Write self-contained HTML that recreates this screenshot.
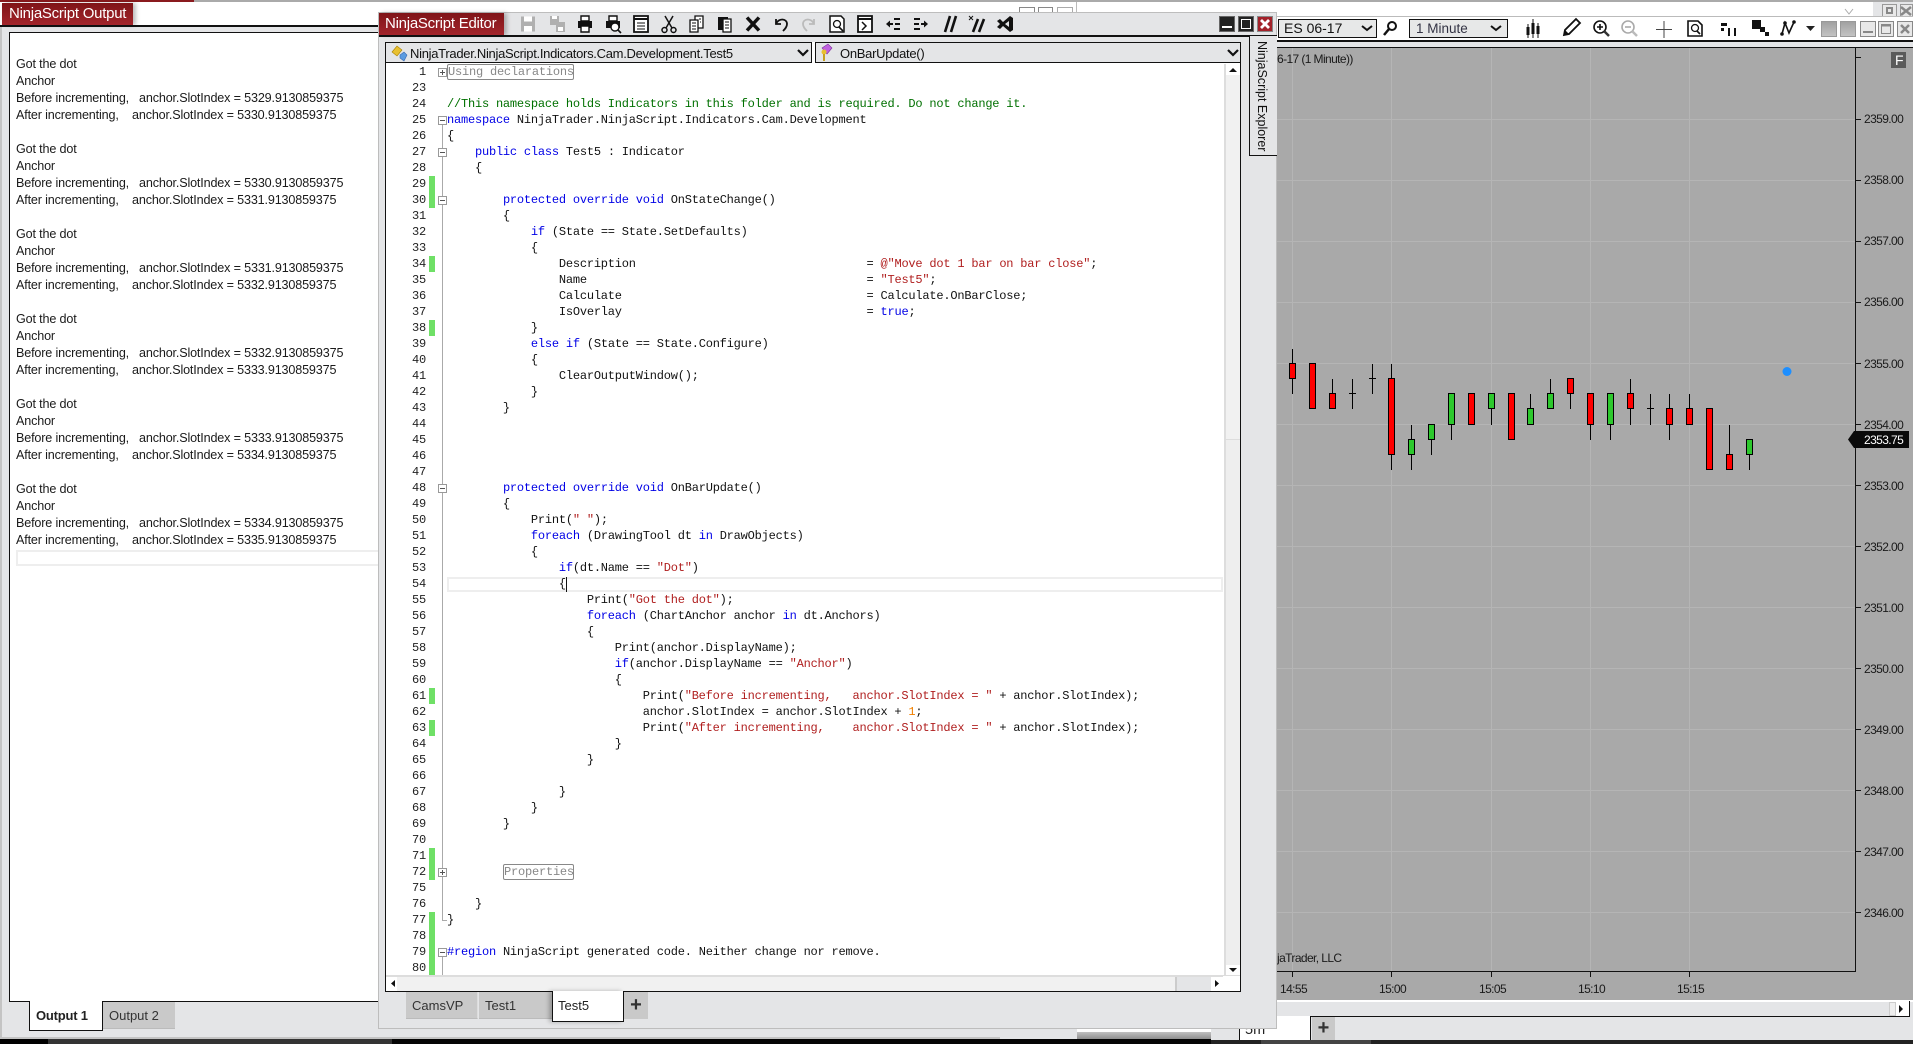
<!DOCTYPE html>
<html><head><meta charset="utf-8"><title>NinjaScript Editor</title>
<style>
html,body{margin:0;padding:0;background:#fff;width:1913px;height:1044px;overflow:hidden}
body{position:relative;font-family:"Liberation Sans",sans-serif;color:#111}
.a{position:absolute;box-sizing:border-box}
pre{margin:0;position:absolute}
.red{background:linear-gradient(#7f1418,#a2242a);color:#fff;font-size:15px;line-height:22px;letter-spacing:-.25px;white-space:nowrap;box-shadow:3px 0 4px rgba(0,0,0,.25)}
.out{left:16px;top:56px;font:12.6px/17px "Liberation Sans",sans-serif;color:#1a1a1a;letter-spacing:-.16px}
.code{left:447px;top:64px;font:12px/16px "Liberation Mono",monospace;letter-spacing:-.21px;color:#111}
.nums{left:396px;width:30px;top:64px;text-align:right;font:12px/16px "Liberation Mono",monospace;letter-spacing:-.21px;color:#222}
.code b{font-weight:normal;color:#0000e6}.code i{font-style:normal;color:#007000}.code s{text-decoration:none;color:#b01f1f}.code u{text-decoration:none;color:#f08000}
.box{color:#888;border:1px solid #888;border-radius:2px;font:12px/14px "Liberation Mono",monospace;letter-spacing:-.21px;padding:0;height:16px;white-space:pre}
.g{position:absolute;left:429px;width:6px;background:#6fe066}
.fold{position:absolute;left:438px;width:9px;height:9px;border:1px solid #999;background:#fff;box-sizing:border-box}
.fold:before{content:"";position:absolute;left:1px;right:1px;top:3px;height:1px;background:#555}
.fold.p:after{content:"";position:absolute;top:1px;bottom:1px;left:3px;width:1px;background:#555}
.tab{position:absolute;font-size:13px;line-height:16px;color:#333;white-space:nowrap}
</style></head><body>

<!-- top background -->
<div class="a" style="left:0;top:0;width:1913px;height:2px;background:#aaa"></div>
<div class="a" style="left:0;top:0;width:194px;height:2px;background:#8a1a1e"></div>
<div class="a" style="left:1019px;top:7px;width:16px;height:8px;background:#fff;border:1px solid #888;border-bottom:0"></div>
<div class="a" style="left:1038px;top:7px;width:15px;height:8px;background:#fff;border:1px solid #888;border-bottom:0"></div>
<div class="a" style="left:1057px;top:7px;width:16px;height:8px;background:#fff;border:1px solid #aaa;border-bottom:0"></div>
<div class="a" style="left:1076px;top:2px;width:1px;height:12px;background:#bbb"></div>
<div class="a" style="left:1873px;top:2px;width:40px;height:15px;background:#e4e5e7"></div>
<div class="a" style="left:1882px;top:4px;width:15px;height:13px;background:#e8e8e8;border:1px solid #999"></div>
<div class="a" style="left:1886px;top:7px;width:7px;height:7px;border:2px solid #888"></div>
<div class="a" style="left:1900px;top:4px;width:13px;height:13px;background:#e8e8e8;border:1px solid #999"></div>

<!-- Output window -->
<div class="a" style="left:0;top:25px;width:1100px;height:1014px;background:#e4e5e7;border-left:2px solid #c4c4c4"></div>
<div class="a" style="left:0;top:25px;width:400px;height:2px;background:#111"></div>
<div class="a" style="left:0;top:1037px;width:1240px;height:2px;background:#c4c4c4"></div>
<div class="a red" style="left:2px;top:3px;width:131px;height:22px;padding-left:7px">NinjaScript Output</div>
<div class="a" style="left:9px;top:32px;width:380px;height:970px;background:#fff;border:1px solid #111"></div>
<pre class="out">
Got the dot
Anchor
Before incrementing,   anchor.SlotIndex = 5329.9130859375
After incrementing,    anchor.SlotIndex = 5330.9130859375

Got the dot
Anchor
Before incrementing,   anchor.SlotIndex = 5330.9130859375
After incrementing,    anchor.SlotIndex = 5331.9130859375

Got the dot
Anchor
Before incrementing,   anchor.SlotIndex = 5331.9130859375
After incrementing,    anchor.SlotIndex = 5332.9130859375

Got the dot
Anchor
Before incrementing,   anchor.SlotIndex = 5332.9130859375
After incrementing,    anchor.SlotIndex = 5333.9130859375

Got the dot
Anchor
Before incrementing,   anchor.SlotIndex = 5333.9130859375
After incrementing,    anchor.SlotIndex = 5334.9130859375

Got the dot
Anchor
Before incrementing,   anchor.SlotIndex = 5334.9130859375
After incrementing,    anchor.SlotIndex = 5335.9130859375</pre>
<div class="a" style="left:16px;top:550px;width:364px;height:16px;border:2px solid #eee;border-right:0"></div>
<div class="a" style="left:29px;top:1001px;width:74px;height:30px;background:#fff;border:1px solid #111;border-top:0"></div>
<div class="tab" style="left:36px;top:1008px;font-weight:bold;color:#222;letter-spacing:-.2px">Output 1</div>
<div class="a" style="left:103px;top:1002px;width:72px;height:27px;background:#c9c9c9;border-bottom:1px solid #bbb"></div>
<div class="tab" style="left:109px;top:1008px">Output 2</div>

<!-- Chart window -->
<div class="a" style="left:1240px;top:16px;width:673px;height:1024px;background:#e4e5e7"></div>
<div class="a" style="left:1240px;top:16px;width:673px;height:1px;background:#bbb"></div>
<div class="a" style="left:1240px;top:17px;width:673px;height:23px;background:#fff"></div>
<div class="a" style="left:1240px;top:40px;width:673px;height:2px;background:#111"></div>
<div class="a" style="left:1240px;top:47px;width:673px;height:953px;background:#a9a9a9;border-top:1px solid #111"></div>
<div class="a" style="left:1240px;top:1000px;width:673px;height:2px;background:#fff"></div>
<div class="a" style="left:1311px;top:1016px;width:598px;height:1px;background:#111"></div>
<div class="a" style="left:1909px;top:1001px;width:1px;height:16px;background:#111"></div>
<div class="a" style="left:1239px;top:1016px;width:72px;height:24px;background:#fff;border-left:1px solid #111;border-right:1px solid #111"></div>
<div class="a" style="left:1245px;top:1022px;font-size:14.5px;color:#222">5m</div>
<div class="a" style="left:1312px;top:1017px;width:23px;height:23px;background:#c9c9c9;font:bold 20px/23px 'Liberation Sans';text-align:center;color:#333">+</div>
<div class="a" style="left:1889px;top:1002px;width:7px;height:14px;background:#eee;border:1px solid #ccc"></div>
<div class="a" style="left:1896px;top:1002px;width:13px;height:14px;background:#fff"></div>

<svg class="a" style="left:0;top:0" width="1913" height="1044" viewBox="0 0 1913 1044" font-family="Liberation Sans" font-size="12">
<!-- faint behind-window glyph -->
<path d="M1845 9l4 5 4-5" fill="none" stroke="#aaa"/>
<path d="M1901 7l10 8M1911 7l-10 8" stroke="#888" stroke-width="2.500"/>
<!-- grid -->
<g fill="#b5b5b5">
<rect x="1292" y="48" width="1" height="923"/><rect x="1391" y="48" width="1" height="923"/><rect x="1491" y="48" width="1" height="923"/><rect x="1590" y="48" width="1" height="923"/><rect x="1689" y="48" width="1" height="923"/>
<rect x="1240" y="119" width="616" height="1"/><rect x="1240" y="180" width="616" height="1"/><rect x="1240" y="241" width="616" height="1"/><rect x="1240" y="302" width="616" height="1"/><rect x="1240" y="363" width="616" height="1"/><rect x="1240" y="424" width="616" height="1"/><rect x="1240" y="485" width="616" height="1"/><rect x="1240" y="546" width="616" height="1"/><rect x="1240" y="607" width="616" height="1"/><rect x="1240" y="668" width="616" height="1"/><rect x="1240" y="729" width="616" height="1"/><rect x="1240" y="790" width="616" height="1"/><rect x="1240" y="851" width="616" height="1"/><rect x="1240" y="912" width="616" height="1"/>
</g>
<!-- axes -->
<rect x="1855" y="47" width="1" height="925" fill="#111"/>
<rect x="1240" y="971" width="616" height="1" fill="#111"/>
<g fill="#111">
<rect x="1856" y="57" width="5" height="1"/><rect x="1856" y="119" width="5" height="1"/><rect x="1856" y="180" width="5" height="1"/><rect x="1856" y="241" width="5" height="1"/><rect x="1856" y="302" width="5" height="1"/><rect x="1856" y="363" width="5" height="1"/><rect x="1856" y="424" width="5" height="1"/><rect x="1856" y="485" width="5" height="1"/><rect x="1856" y="546" width="5" height="1"/><rect x="1856" y="607" width="5" height="1"/><rect x="1856" y="668" width="5" height="1"/><rect x="1856" y="729" width="5" height="1"/><rect x="1856" y="790" width="5" height="1"/><rect x="1856" y="851" width="5" height="1"/><rect x="1856" y="912" width="5" height="1"/>
<rect x="1292" y="972" width="1" height="5"/><rect x="1391" y="972" width="1" height="5"/><rect x="1491" y="972" width="1" height="5"/><rect x="1590" y="972" width="1" height="5"/><rect x="1689" y="972" width="1" height="5"/>
</g>
<g fill="#1a1a1a" letter-spacing="-.6">
<text x="1864" y="123">2359.00</text><text x="1864" y="184">2358.00</text><text x="1864" y="245">2357.00</text><text x="1864" y="306">2356.00</text><text x="1864" y="368">2355.00</text><text x="1864" y="429">2354.00</text><text x="1864" y="490">2353.00</text><text x="1864" y="551">2352.00</text><text x="1864" y="612">2351.00</text><text x="1864" y="673">2350.00</text><text x="1864" y="734">2349.00</text><text x="1864" y="795">2348.00</text><text x="1864" y="856">2347.00</text><text x="1864" y="917">2346.00</text>
<text x="1280" y="993">14:55</text><text x="1379" y="993">15:00</text><text x="1479" y="993">15:05</text><text x="1578" y="993">15:10</text><text x="1677" y="993">15:15</text>
<text x="1277" y="63">6-17 (1 Minute))</text>
<text x="1277" y="962">jaTrader, LLC</text>
</g>
<!-- F box -->
<rect x="1891" y="52" width="15" height="16" fill="#5a5a5a"/><text x="1895" y="65" fill="#fff" font-size="14">F</text>
<!-- price marker -->
<path d="M1848 439.5l6-8.5h55v17h-55z" fill="#0a0a0a"/><text x="1864" y="444" fill="#fff" letter-spacing="-.6">2353.75</text>
<!-- dot -->
<circle cx="1787" cy="371.5" r="4.5" fill="#1e8fff"/>
<!-- wicks -->
<g fill="#000">
<rect x="1292" y="349" width="1" height="45"/>
<rect x="1332" y="379" width="1" height="30"/>
<rect x="1352" y="379" width="1" height="30"/><rect x="1349" y="393" width="7" height="1"/>
<rect x="1372" y="364" width="1" height="30"/><rect x="1369" y="378" width="7" height="1"/>
<rect x="1391" y="364" width="1" height="106"/>
<rect x="1411" y="425" width="1" height="45"/>
<rect x="1431" y="425" width="1" height="30"/>
<rect x="1451" y="424" width="1" height="16"/>
<rect x="1491" y="408" width="1" height="17"/>
<rect x="1530" y="394" width="1" height="15"/>
<rect x="1550" y="379" width="1" height="15"/>
<rect x="1570" y="393" width="1" height="16"/>
<rect x="1590" y="424" width="1" height="16"/>
<rect x="1610" y="424" width="1" height="16"/>
<rect x="1630" y="379" width="1" height="46"/>
<rect x="1650" y="394" width="1" height="31"/><rect x="1647" y="408" width="7" height="1"/>
<rect x="1669" y="394" width="1" height="46"/>
<rect x="1689" y="394" width="1" height="15"/>
<rect x="1729" y="425" width="1" height="30"/>
<rect x="1749" y="454" width="1" height="16"/>
</g>
<!-- bodies -->
<g fill="#f00" stroke="#000">
<rect x="1289.5" y="363.5" width="6" height="15"/>
<rect x="1309.5" y="363.5" width="6" height="45"/>
<rect x="1329.5" y="393.5" width="6" height="15"/>
<rect x="1388.5" y="378.5" width="6" height="76"/>
<rect x="1468.5" y="393.5" width="6" height="31"/>
<rect x="1508.5" y="393.5" width="6" height="46"/>
<rect x="1567.5" y="378.5" width="6" height="15"/>
<rect x="1587.5" y="393.5" width="6" height="31"/>
<rect x="1627.5" y="393.5" width="6" height="15"/>
<rect x="1666.5" y="408.5" width="6" height="16"/>
<rect x="1686.5" y="408.5" width="6" height="16"/>
<rect x="1706.5" y="408.5" width="6" height="61"/>
<rect x="1726.5" y="454.5" width="6" height="15"/>
</g>
<g fill="#2dc82d" stroke="#000">
<rect x="1408.5" y="439.5" width="6" height="15"/>
<rect x="1428.5" y="424.5" width="6" height="15"/>
<rect x="1448.5" y="393.5" width="6" height="31"/>
<rect x="1488.5" y="393.5" width="6" height="15"/>
<rect x="1527.5" y="408.5" width="6" height="16"/>
<rect x="1547.5" y="393.5" width="6" height="15"/>
<rect x="1607.5" y="393.5" width="6" height="31"/>
<rect x="1746.5" y="439.5" width="6" height="15"/>
</g>
<path d="M1899 1005l4 4-4 4z" fill="#111"/>
</svg>

<!-- chart toolbar combos -->
<div class="a" style="left:1278px;top:19px;width:99px;height:19px;background:#e7e8e8;border:1px solid #111;font-size:14px;line-height:17px;padding-left:5px">ES 06-17</div>
<div class="a" style="left:1409px;top:19px;width:99px;height:19px;background:#e7e8e8;border:1px solid #111;font-size:13.5px;line-height:17px;padding-left:6px;color:#334">1 Minute</div>

<svg class="a" style="left:0;top:0" width="1913" height="1044" viewBox="0 0 1913 1044">
<defs><linearGradient id="gb" x1="0" y1="0" x2="0" y2="1"><stop offset="0" stop-color="#a0a0a0"/><stop offset="1" stop-color="#c4c4c4"/></linearGradient></defs>
<g fill="none" stroke="#111" stroke-width="2">
<path d="M1362 26l5 4 5-4M1491 26l5 4 5-4"/>
<circle cx="1392" cy="26" r="4"/><path d="M1389 29l-5 6" stroke-width="2.5"/>
<path d="M1528 24v14M1533 19v19M1538 23v15" stroke-width="1"/>
</g>
<path d="M1526.5 27h3v8h-3zM1531.5 23h3v11h-3zM1536.5 26h3v8h-3z" fill="#111"/>
<!-- pencil -->
<path d="M1564 35l1-5 11-11 4 4-11 11z" fill="#fff" stroke="#111" stroke-width="1.8"/><path d="M1564 35l1-5 4 4z" fill="#111"/>
<!-- zoom in -->
<circle cx="1600" cy="27" r="6" fill="#fff" stroke="#111" stroke-width="1.6"/><path d="M1597 27h6M1600 24v6" stroke="#111" stroke-width="1.6"/><path d="M1604 31l5 5" stroke="#333" stroke-width="2.5"/>
<!-- zoom out -->
<circle cx="1628" cy="27" r="6" fill="#fff" stroke="#aaa" stroke-width="1.6"/><path d="M1625 27h6" stroke="#aaa" stroke-width="1.6"/><path d="M1632 31l5 5" stroke="#bbb" stroke-width="2.5"/>
<!-- crosshair -->
<path d="M1656 29.500h16M1664 21v17" stroke="#444" stroke-width="1"/>
<!-- doc search -->
<path d="M1688 21h10l4 4v11h-14z" fill="#fff" stroke="#111" stroke-width="1.6"/><circle cx="1695" cy="28" r="3.500" fill="none" stroke="#111" stroke-width="1.3"/><path d="M1697 31l3 3" stroke="#111" stroke-width="1.6"/>
<!-- props -->
<rect x="1721" y="23" width="6" height="3" fill="#111"/><rect x="1721" y="28" width="3" height="3" fill="#111"/><rect x="1728" y="28" width="2" height="8" fill="#111"/><rect x="1734" y="28" width="2" height="8" fill="#111"/>
<!-- layers -->
<rect x="1752" y="20" width="9" height="9" fill="#111"/><rect x="1760" y="27" width="5" height="5" fill="#111"/><rect x="1765" y="32" width="4" height="4" fill="#111"/>
<!-- drawing -->
<path d="M1782 34l3-11 4 10 5-11" fill="none" stroke="#111" stroke-width="1.6"/><circle cx="1782" cy="34" r="1.800" fill="#111"/><circle cx="1794" cy="22" r="1.800" fill="#111"/><circle cx="1785" cy="23" r="1.800" fill="#111"/><path d="M1806 26h9l-4.500 5z" fill="#222"/>
<!-- win buttons -->
<rect x="1821.500" y="21.500" width="15" height="15" fill="url(#gb)" stroke="#999"/><rect x="1840.500" y="21.500" width="15" height="15" fill="url(#gb)" stroke="#999"/>
<rect x="1860.500" y="21.500" width="15" height="15" fill="#e8e8e8" stroke="#888"/><path d="M1863 32h10" stroke="#888" stroke-width="2"/>
<rect x="1878.500" y="21.500" width="15" height="15" fill="#e8e8e8" stroke="#888"/><rect x="1881.500" y="24.500" width="9" height="9" fill="none" stroke="#888"/><path d="M1881 25.500h10" stroke="#888" stroke-width="2"/>
<rect x="1897.500" y="21.500" width="15" height="15" fill="#e8e8e8" stroke="#888"/><path d="M1901 25l8 8M1909 25l-8 8" stroke="#888" stroke-width="2.500"/>
</svg>

<!-- Editor window -->
<div class="a" style="left:378px;top:12px;width:899px;height:1017px;background:#e4e5e7;border:1px solid #bdbdbd"></div>
<div class="a" style="left:379px;top:35px;width:898px;height:2px;background:#111"></div>
<div class="a red" style="left:379px;top:13px;width:125px;height:22px;padding-left:6px">NinjaScript Editor</div>

<!-- explorer tab -->
<div class="a" style="left:1249px;top:36px;width:28px;height:120px;background:#e4e5e7;border-left:1px solid #111;border-bottom:1px solid #111"></div>
<div class="a" style="left:1254px;top:41px;width:110px;height:16px;font-size:12.5px;line-height:16px;transform-origin:0 0;transform:translate(16px,0) rotate(90deg);white-space:nowrap;color:#111">NinjaScript Explorer</div>

<!-- editor area -->
<div class="a" style="left:385px;top:42px;width:856px;height:950px;background:#fff;border:1px solid #111"></div>
<div class="a" style="left:386px;top:43px;width:854px;height:20px;background:#e4e5e7;border-bottom:1px solid #111"></div>
<div class="a" style="left:811px;top:42px;width:5px;height:21px;background:#fff;border-left:1px solid #111;border-right:1px solid #111"></div>
<div class="a" style="left:410px;top:44px;font-size:13px;line-height:19px;letter-spacing:-.29px;color:#111">NinjaTrader.NinjaScript.Indicators.Cam.Development.Test5</div>
<div class="a" style="left:840px;top:44px;font-size:13px;line-height:19px;letter-spacing:-.29px;color:#111">OnBarUpdate()</div>

<!-- current line -->
<div class="a" style="left:447px;top:577px;width:776px;height:15px;border:2px solid #eee"></div>
<div class="a" style="left:566px;top:577px;width:1px;height:15px;background:#111"></div>

<!-- gutter -->
<div class="g" style="top:176px;height:32px"></div><div class="g" style="top:256px;height:16px"></div><div class="g" style="top:320px;height:16px"></div><div class="g" style="top:688px;height:16px"></div><div class="g" style="top:720px;height:16px"></div><div class="g" style="top:848px;height:32px"></div><div class="g" style="top:912px;height:64px"></div>
<div class="a" style="left:442px;top:120px;width:1px;height:800px;background:#aaa"></div>
<div class="a" style="left:442px;top:920px;width:5px;height:1px;background:#aaa"></div>
<div class="a" style="left:442px;top:952px;width:1px;height:24px;background:#aaa"></div>
<div class="fold p" style="top:68px"></div><div class="fold" style="top:116px"></div><div class="fold" style="top:148px"></div><div class="fold" style="top:196px"></div><div class="fold" style="top:484px"></div><div class="fold p" style="top:868px"></div><div class="fold" style="top:948px"></div>

<pre class="nums">1
23
24
25
26
27
28
29
30
31
32
33
34
35
36
37
38
39
40
41
42
43
44
45
46
47
48
49
50
51
52
53
54
55
56
57
58
59
60
61
62
63
64
65
66
67
68
69
70
71
72
75
76
77
78
79
80</pre>
<div class="a box" style="left:447px;top:64px;width:127px">Using declarations</div>
<pre class="code">


<i>//This namespace holds Indicators in this folder and is required. Do not change it.</i>
<b>namespace</b> NinjaTrader.NinjaScript.Indicators.Cam.Development
{
    <b>public</b> <b>class</b> Test5 : Indicator
    {

        <b>protected</b> <b>override</b> <b>void</b> OnStateChange()
        {
            <b>if</b> (State == State.SetDefaults)
            {
                Description                                 = <s>@"Move dot 1 bar on bar close"</s>;
                Name                                        = <s>"Test5"</s>;
                Calculate                                   = Calculate.OnBarClose;
                IsOverlay                                   = <b>true</b>;
            }
            <b>else</b> <b>if</b> (State == State.Configure)
            {
                ClearOutputWindow();
            }
        }




        <b>protected</b> <b>override</b> <b>void</b> OnBarUpdate()
        {
            Print(<s>" "</s>);
            <b>foreach</b> (DrawingTool dt <b>in</b> DrawObjects)
            {
                <b>if</b>(dt.Name == <s>"Dot"</s>)
                {
                    Print(<s>"Got the dot"</s>);
                    <b>foreach</b> (ChartAnchor anchor <b>in</b> dt.Anchors)
                    {
                        Print(anchor.DisplayName);
                        <b>if</b>(anchor.DisplayName == <s>"Anchor"</s>)
                        {
                            Print(<s>"Before incrementing,   anchor.SlotIndex = "</s> + anchor.SlotIndex);
                            anchor.SlotIndex = anchor.SlotIndex + <u>1</u>;
                            Print(<s>"After incrementing,    anchor.SlotIndex = "</s> + anchor.SlotIndex);
                        }
                    }

                }
            }
        }




    }
}

<b>#region</b> NinjaScript generated code. Neither change nor remove.</pre>
<div class="a box" style="left:503px;top:864px;width:71px">Properties</div>

<!-- scrollbars -->
<div class="a" style="left:1224px;top:64px;width:16px;height:912px;background:#eee;border-left:2px solid #ddd"></div>
<div class="a" style="left:1226px;top:75px;width:14px;height:365px;background:#f1f1f1;border-bottom:1px solid #ddd"></div>
<div class="a" style="left:1226px;top:64px;width:14px;height:11px;background:#fff"></div>
<div class="a" style="left:1226px;top:965px;width:14px;height:11px;background:#fff"></div>
<div class="a" style="left:386px;top:975px;width:854px;height:16px;background:#e4e5e7;border-top:2px solid #ddd"></div>
<div class="a" style="left:397px;top:977px;width:780px;height:14px;background:#f1f1f1;border-right:2px solid #ccc"></div>
<div class="a" style="left:386px;top:977px;width:11px;height:14px;background:#fff"></div>
<div class="a" style="left:1211px;top:977px;width:12px;height:14px;background:#fff"></div>
<div class="a" style="left:1223px;top:976px;width:17px;height:15px;background:#fff"></div>

<!-- editor tabs -->
<div class="a" style="left:406px;top:992px;width:72px;height:27px;background:#c9c9c9;border-right:1px solid #ddd;border-bottom:1px solid #bbb"></div>
<div class="a" style="left:479px;top:992px;width:73px;height:27px;background:#c9c9c9;border-bottom:1px solid #bbb"></div>
<div class="a" style="left:552px;top:991px;width:72px;height:31px;background:#fff;border:1px solid #111;border-top:0;box-shadow:-3px 0 4px rgba(0,0,0,.25)"></div>
<div class="a" style="left:624px;top:992px;width:24px;height:27px;background:#c9c9c9;font:bold 20px/26px 'Liberation Sans';text-align:center;color:#333">+</div>
<div class="tab" style="left:412px;top:998px">CamsVP</div>
<div class="tab" style="left:485px;top:998px">Test1</div>
<div class="tab" style="left:558px;top:998px;color:#222">Test5</div>

<!-- bottom strip -->
<div class="a" style="left:1000px;top:1029px;width:239px;height:11px;background:#e4e5e7"></div>
<div class="a" style="left:1077px;top:1029px;width:134px;height:3px;background:#fff"></div>
<div class="a" style="left:1077px;top:1032px;width:134px;height:8px;background:linear-gradient(#c0c0c0,#888)"></div>
<div class="a" style="left:0;top:1040px;width:1913px;height:4px;background:#222"></div>
<div class="a" style="left:0;top:1039px;width:48px;height:5px;background:#000"></div>
<div class="a" style="left:48px;top:1039px;width:344px;height:5px;background:#333"></div>
<div class="a" style="left:392px;top:1039px;width:819px;height:5px;background:#050505"></div>
<div class="a" style="left:1261px;top:1040px;width:110px;height:4px;background:#444"></div>

<!-- editor icons -->
<svg class="a" style="left:0;top:0" width="1913" height="1044" viewBox="0 0 1913 1044">
<g fill="none" stroke="#111" stroke-width="2.200">
<path d="M798 50l5 5 5-5M1228 50l5 5 5-5"/>
</g>
<path d="M392 52l5-6 5 4-5 6z" fill="#e8c030" stroke="#a88000" stroke-width=".6"/><path d="M400 55l4-3 3 3-3 6-4-3z" fill="#5b9be0" stroke="#3a6ab0" stroke-width=".6"/>
<path d="M822 48l6-4 4 4-5 6z" fill="#c060e0" stroke="#8030a0" stroke-width=".6"/><circle cx="824" cy="52" r="2.500" fill="#e8c030"/><path d="M824 54v7" stroke="#c8a020" stroke-width="2"/>
<path d="M1229 72h8l-4-4zM1229 968h8l-4 4zM395 980v7l-4-3.500zM1215 980v7l4-3.500z" fill="#111"/>
<g transform="translate(528,24)"><path d="M-7-7.500h14v15h-14z" fill="#b0b0b0"/><path d="M-4-7.500h8v5h-8zM-4 2h8v5.500h-8z" fill="#fff"/></g>
<g transform="translate(557,24)" fill="#b0b0b0"><path d="M-7-8h9v9h-9z"/><path d="M-1-2h9v10h-9z"/><path d="M-5-8h5v3h-5zM1 3h5v4h-5z" fill="#fff"/></g>
<g transform="translate(585,24)"><path d="M-4-8h8v5h-8z" fill="#fff" stroke="#111" stroke-width="1.400"/><path d="M-7-3h14v7h-14z" fill="#111"/><path d="M-4 2h8v6h-8z" fill="#fff" stroke="#111" stroke-width="1.400"/></g>
<g transform="translate(613,24)"><path d="M-4-8h8v5h-8z" fill="#fff" stroke="#111" stroke-width="1.400"/><path d="M-7-3h14v7h-14z" fill="#111"/><circle cx="2" cy="3" r="4" fill="#fff" stroke="#111" stroke-width="1.400"/><path d="M5 6l3 3" stroke="#111" stroke-width="1.600"/></g>
<g transform="translate(641,24)"><path d="M-7-8h14v16h-14z" fill="#fff" stroke="#111" stroke-width="1.800"/><path d="M-7-6h14v2h-14z" fill="#111"/><path d="M-4-1h8M-4 2h8M-4 5h8" stroke="#111" stroke-width="1"/></g>
<g transform="translate(669,24)" fill="none" stroke="#111" stroke-width="1.500"><path d="M-4-8L3 4M4-8L-3 4"/><circle cx="-4.500" cy="6" r="2.500"/><circle cx="4.500" cy="6" r="2.500"/></g>
<g transform="translate(697,24)"><path d="M-2-8h8v12h-8z" fill="#fff" stroke="#111" stroke-width="1.300"/><path d="M-7-4h8v12h-8z" fill="#fff" stroke="#111" stroke-width="1.300"/><path d="M-5-1h4M-5 2h4M-5 5h4M2-5h2M3-2h1" stroke="#111"/></g>
<g transform="translate(725,24)"><path d="M-7-7h10v13h-10z" fill="#111"/><path d="M-2-5h8v13h-8z" fill="#fff" stroke="#111" stroke-width="1.300"/><path d="M0-2h4M0 1h4M0 4h4" stroke="#111"/></g>
<g transform="translate(753,24)"><path d="M-6-6.500L6 6.500M6-6.500L-6 6.500" stroke="#111" stroke-width="3.500"/></g>
<g transform="translate(781,24)"><path d="M-5 -5v5h5" fill="none" stroke="#111" stroke-width="1.800"/><path d="M-5 0C-3-6 6-6 6 0c0 3-2 5-4 7" fill="none" stroke="#111" stroke-width="1.800"/></g>
<g transform="translate(809,24)"><path d="M5 -5v5h-5" fill="none" stroke="#bbb" stroke-width="1.800"/><path d="M5 0C3-6-6-6-6 0c0 3 2 5 4 7" fill="none" stroke="#bbb" stroke-width="1.800"/></g>
<g transform="translate(837,24)"><path d="M-7-8h11l3 3v13h-14z" fill="#fff" stroke="#111" stroke-width="1.500"/><circle cx="0" cy="0" r="3.500" fill="none" stroke="#111" stroke-width="1.300"/><path d="M2 3l4 4" stroke="#111" stroke-width="1.600"/></g>
<g transform="translate(865,24)"><path d="M-7-8h14v16h-14z" fill="#fff" stroke="#111" stroke-width="1.800"/><path d="M-7-6h14v2h-14z" fill="#111"/><path d="M-3-2l4 4-4 4" fill="none" stroke="#111" stroke-width="1.500"/></g>
<g transform="translate(893,24)" fill="#111"><path d="M-7 0l4-3.500v7z"/><path d="M-3-1h3v2h-3zM1-6h6v2h-6zM2-1h5v2h-5zM1 4h6v2h-6z"/></g>
<g transform="translate(921,24)" fill="#111"><path d="M7 0l-4-3.500v7z"/><path d="M0-1h3v2h-3zM-7-6h6v2h-6zM-7-1h5v2h-5zM-7 4h6v2h-6z"/></g>
<g transform="translate(949,24)" stroke="#111" stroke-width="2.600"><path d="M-4 8L1-8M2 8L7-8"/></g>
<g transform="translate(976,24)" stroke="#111" stroke-width="2.600"><path d="M-3 8L2-5M3 8L8-5"/><path d="M-7-8l4 4M-3-8l-4 4" stroke-width="1"/></g>
<g transform="translate(1005,24)"><path d="M-8-3l3-2 3 3L5-8l3 2V6L5 8-2 2-5 5l-3-2 3-3z" fill="#111"/><path d="M4-3v6L0 0z" fill="#e4e5e7"/></g>
<rect x="1219.500" y="16.500" width="15" height="15" fill="#222" stroke="#666"/><path d="M1222 27h10" stroke="#fff" stroke-width="2"/>
<rect x="1238.500" y="16.500" width="15" height="15" fill="#222" stroke="#666"/><rect x="1241.500" y="19.500" width="9" height="9" fill="none" stroke="#fff"/>
<rect x="1257.500" y="16.500" width="15" height="15" fill="#a3222a" stroke="#888"/><path d="M1261 20l8 8M1269 20l-8 8" stroke="#fff" stroke-width="2.800"/>
</svg>
</body></html>
